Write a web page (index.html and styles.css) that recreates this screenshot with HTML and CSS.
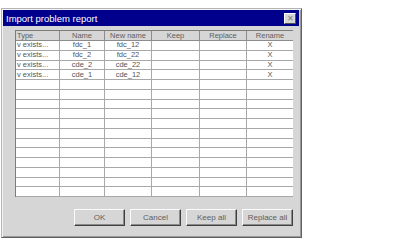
FILE: index.html
```html
<!DOCTYPE html>
<html lang="en">
<head>
    <meta charset="UTF-8">
    <title>Import problem report</title>
    <link rel="stylesheet" href="styles.css">
</head>
<body>
    <div class="dialog">
        <div class="titlebar">
            <span class="title">Import problem report</span>
            <span class="close">&#x2715;</span>
        </div>

        <div class="grid">
            <table>
                <colgroup>
                    <col class="c1"><col class="c2"><col class="c3"><col class="c4"><col class="c5"><col class="c6">
                </colgroup>
                <tr class="head">
                    <td class="left">Type</td><td>Name</td><td>New name</td><td>Keep</td><td>Replace</td><td>Rename</td>
                </tr>
                <tr><td class="left">v exists...</td><td>fdc_1</td><td>fdc_12</td><td></td><td></td><td>X</td></tr>
                <tr><td class="left">v exists...</td><td>fdc_2</td><td>fdc_22</td><td></td><td></td><td>X</td></tr>
                <tr><td class="left">v exists...</td><td>cde_2</td><td>cde_22</td><td></td><td></td><td>X</td></tr>
                <tr><td class="left">v exists...</td><td>cde_1</td><td>cde_12</td><td></td><td></td><td>X</td></tr>
                <tr><td></td><td></td><td></td><td></td><td></td><td></td></tr>
                <tr><td></td><td></td><td></td><td></td><td></td><td></td></tr>
                <tr><td></td><td></td><td></td><td></td><td></td><td></td></tr>
                <tr><td></td><td></td><td></td><td></td><td></td><td></td></tr>
                <tr><td></td><td></td><td></td><td></td><td></td><td></td></tr>
                <tr><td></td><td></td><td></td><td></td><td></td><td></td></tr>
                <tr><td></td><td></td><td></td><td></td><td></td><td></td></tr>
                <tr><td></td><td></td><td></td><td></td><td></td><td></td></tr>
                <tr><td></td><td></td><td></td><td></td><td></td><td></td></tr>
                <tr><td></td><td></td><td></td><td></td><td></td><td></td></tr>
                <tr><td></td><td></td><td></td><td></td><td></td><td></td></tr>
                <tr><td></td><td></td><td></td><td></td><td></td><td></td></tr>
            </table>
        </div>

        <div class="buttons">
            <button>OK</button>
            <button>Cancel</button>
            <button>Keep all</button>
            <button>Replace all</button>
        </div>
    </div>
</body>
</html>
```

FILE: styles.css
```css
body {
    margin: 0;
    background: #fff;
    font-family: "Liberation Sans", Arial, sans-serif;
}
.dialog {
    width: 301px;
    height: 230px;
    margin: 8px 0 0 1px;
    box-sizing: border-box;
    padding: 1px 2px 1px 1px;
    background: #d6d6d6;
    border: 1px solid;
    border-color: #b4b4b4 #606060 #606060 #b4b4b4;
    box-shadow: inset 1px 1px #f4f4f4, inset -1px -1px #9a9a9a;
}
.titlebar {
    height: 16px;
    display: flex;
    align-items: center;
    justify-content: space-between;
    padding: 0 3px 0 3px;
    background: #00008c;
}
.title {
    color: #fff;
    font-size: 9.5px;
}
.close {
    width: 12px;
    height: 11px;
    box-sizing: border-box;
    display: flex;
    align-items: center;
    justify-content: center;
    font-size: 8px;
    color: #808080;
    background: #d6d6d6;
    border: 1px solid;
    border-color: #fff #505050 #505050 #fff;
}
.grid {
    margin: 4px 6px 0 12px;
    height: 167px;
    overflow: hidden;
    background: #fff;
}
table {
    width: 279px;
    table-layout: fixed;
    border-collapse: separate;
    border-spacing: 0;
    border-left: 1px solid #7c7c7c;
    border-top: 1px solid #7c7c7c;
    font-size: 7.5px;
    color: #555;
}
.c1 { width: 44px; }
.c2 { width: 45px; }
.c3 { width: 47px; }
.c4 { width: 48px; }
.c5 { width: 47px; }
.c6 { width: 47px; }
tr {
    height: 9.75px;
}
tr.head {
    height: 10px;
}
td {
    padding: 0;
    line-height: 8px;
    text-align: center;
    white-space: nowrap;
    overflow: hidden;
    border-right: 1px solid #a8a8a8;
    border-bottom: 1px solid #a8a8a8;
    box-sizing: border-box;
}
td.left {
    text-align: left;
    padding-left: 1px;
}
.head td {
    background: #d6d6d6;
    border-right-color: #8c8c8c;
    border-bottom-color: #8c8c8c;
    color: #606060;
}
.buttons {
    display: flex;
    justify-content: flex-end;
    gap: 5px;
    margin: 12px 6px 0 0;
}
button {
    width: 51px;
    height: 17px;
    padding: 0;
    font-family: "Liberation Sans", Arial, sans-serif;
    font-size: 8px;
    color: #606060;
    background: #d6d6d6;
    border: 1px solid;
    border-color: #fafafa #404040 #404040 #fafafa;
    box-shadow: inset -1px -1px #8a8a8a;
}
```
